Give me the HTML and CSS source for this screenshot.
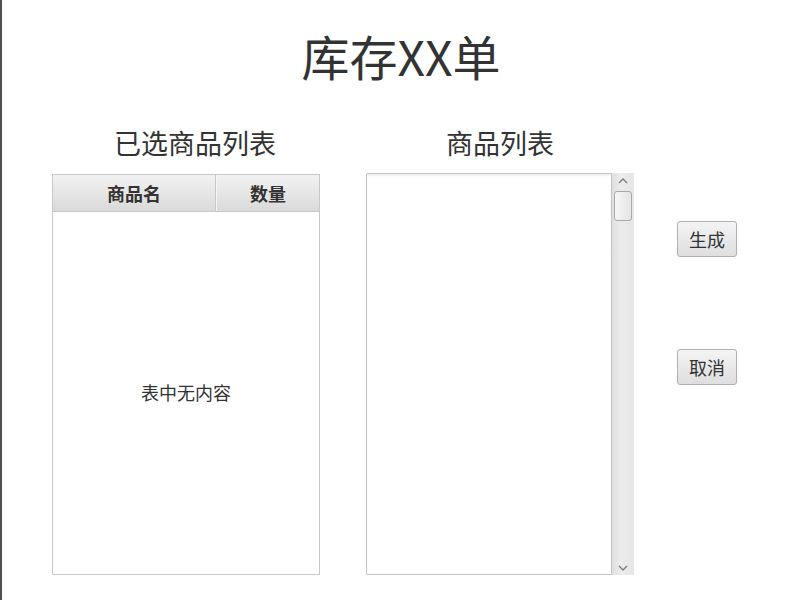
FILE: index.html
```html
<!DOCTYPE html>
<html lang="zh-CN">
<head>
    <meta charset="UTF-8">
    <meta name="viewport" content="width=device-width, initial-scale=1.0">
    <title>库存XX单</title>
    <link rel="stylesheet" href="styles.css">
</head>
<body>
    <div class="window">
        <h1 class="title">库存XX单</h1>

        <div class="content">
            <div class="panel">
                <h2 class="panel-title selected-title">已选商品列表</h2>
                <div class="table">
                    <div class="table-header">
                        <div class="col col-name">商品名</div>
                        <div class="col col-qty">数量</div>
                    </div>
                    <div class="table-body">
                        <span class="placeholder">表中无内容</span>
                    </div>
                </div>
            </div>

            <div class="panel">
                <h2 class="panel-title">商品列表</h2>
                <div class="list">
                    <div class="list-items"></div>
                    <div class="scrollbar">
                        <svg class="arrow" width="22" height="14" viewBox="0 0 22 14">
                            <polyline points="7,9 11,5 15,9" fill="none" stroke="#7a7a7a" stroke-width="1.3"/>
                        </svg>
                        <div class="thumb"></div>
                        <div class="track"></div>
                        <svg class="arrow" width="22" height="14" viewBox="0 0 22 14">
                            <polyline points="7,5 11,9 15,5" fill="none" stroke="#7a7a7a" stroke-width="1.3"/>
                        </svg>
                    </div>
                </div>
            </div>

            <div class="actions">
                <button class="btn">生成</button>
                <button class="btn">取消</button>
            </div>
        </div>
    </div>
</body>
</html>
```

FILE: styles.css
```css
body {
    margin: 0;
    font-family: "Noto Sans CJK SC", "Noto Sans", sans-serif;
    color: #333;
    background: #fff;
}

.window {
    width: 798px;
    height: 600px;
    border-left: 2px solid #505050;
    overflow: hidden;
}

.title {
    margin: 27px 0 0;
    font-size: 48px;
    font-weight: normal;
    line-height: 56px;
    text-align: center;
}

.content {
    display: flex;
    margin-top: 43px;
    padding-left: 50px;
}

.panel {
    width: 268px;
    margin-right: 46px;
    display: flex;
    flex-direction: column;
}

.panel-title {
    margin: 0 0 14px;
    font-size: 27px;
    font-weight: normal;
    line-height: 34px;
    text-align: center;
}

.selected-title {
    padding-left: 18px;
}

.table {
    height: 401px;
    border: 1px solid #c8c8c8;
    display: flex;
    flex-direction: column;
    box-sizing: border-box;
}

.table-header {
    display: flex;
    height: 36px;
    background: linear-gradient(#f2f2f2, #dadada);
    border-bottom: 1px solid #c8c8c8;
}

.col {
    display: flex;
    align-items: center;
    justify-content: center;
    font-size: 18px;
    font-weight: bold;
    color: #333;
}

.col-name {
    width: 162px;
    border-right: 1px solid #c8c8c8;
}

.col-qty {
    flex: 1;
    border-left: 1px solid #f6f6f6;
}

.table-body {
    flex: 1;
    display: flex;
    align-items: center;
    justify-content: center;
}

.placeholder {
    font-size: 18px;
    margin-top: -2px;
}

.list {
    margin-top: -1px;
    height: 402px;
    display: flex;
}

.list-items {
    flex: 1;
    border: 1px solid #c4c4c4;
    border-radius: 2px 0 0 2px;
    box-shadow: inset 0 2px 2px rgba(0, 0, 0, 0.06);
}

.scrollbar {
    width: 22px;
    display: flex;
    flex-direction: column;
    align-items: center;
    background: linear-gradient(90deg, #dedede, #ececec 40%, #e6e6e6);
}

.arrow {
    display: block;
    margin-top: 1px;
}

.thumb {
    width: 16px;
    height: 28px;
    margin-top: 3px;
    border: 1px solid #a9a9a9;
    border-radius: 3px;
    background: linear-gradient(90deg, #f6f6f6, #e4e4e4);
}

.track {
    flex: 1;
}

.actions {
    margin-left: -3px;
    padding-top: 95px;
    display: flex;
    flex-direction: column;
    gap: 92px;
}

.btn {
    width: 60px;
    height: 36px;
    padding: 0;
    font-family: inherit;
    font-size: 18px;
    color: #333;
    background: linear-gradient(#f4f4f4, #dedede);
    border: 1px solid #b0b0b0;
    border-radius: 3px;
    cursor: pointer;
}
```
